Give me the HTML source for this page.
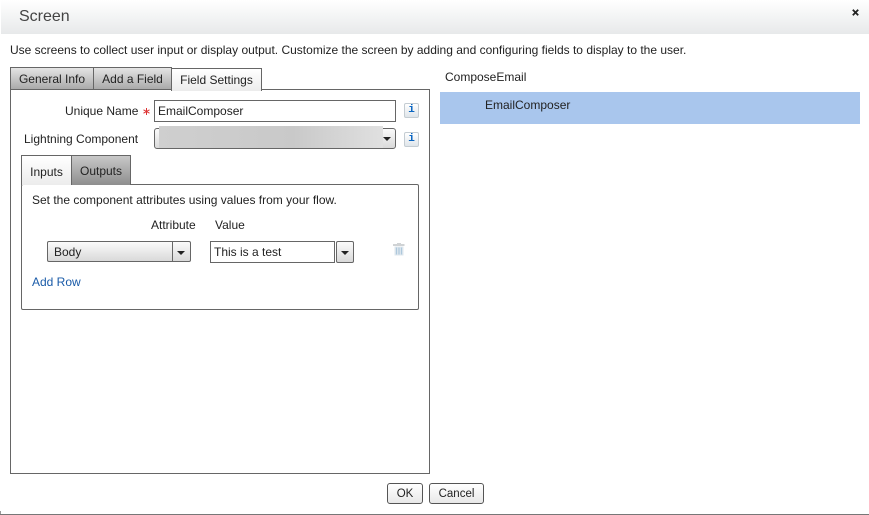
<!DOCTYPE html>
<html><head><meta charset="utf-8"><style>
html,body{margin:0;padding:0;background:#fff}
#p{position:relative;width:869px;height:515px;overflow:hidden;background:#fff;font:12px "Liberation Sans",Arial,sans-serif;color:#222}
#p div{position:absolute;box-sizing:border-box;white-space:nowrap}
.t{line-height:14px}
.tab{background:linear-gradient(#e4e4e4,#aaa);border:1px solid #666;text-align:center}
.on{background:linear-gradient(#fff,#ececec);border:1px solid #666;border-bottom:0;text-align:center}
.info{width:15px;height:15px;background:linear-gradient(#fff,#dfe5ea);border:1px solid #c4ccd2;border-radius:2px;color:#0a66c2;font:bold 11px/13px "Liberation Mono",monospace;text-align:center}
.inp{background:#fff;border:1px solid #666;padding-left:3px}
.sel{background:linear-gradient(#fbfbfb,#d9d9d9);border:1px solid #666;border-radius:2px}
.arr{width:0;height:0;border-left:4px solid transparent;border-right:4px solid transparent;border-top:4px solid #222}
</style></head><body><div id="p">
<div style="left:1px;top:0;width:868px;height:34px;background:linear-gradient(#fff,#e7e9ea)"></div>
<div class="t" style="left:19px;top:8px;font-size:16px;line-height:18px;color:#444">Screen</div>
<svg style="position:absolute;left:852px;top:9px" width="7" height="7" viewBox="0 0 7 7"><path d="M.8.8l5.4 5.4M6.200.8L.8 6.200" stroke="#222" stroke-width="1.800"/></svg>
<div class="t" style="left:10px;top:43px;letter-spacing:0">Use screens to collect user input or display output. Customize the screen by adding and configuring fields to display to the user.</div>

<div style="left:10px;top:89px;width:420px;height:385px;border:1px solid #666"></div>
<div class="tab t" style="left:10px;top:67px;width:84px;height:23px;line-height:22px">General Info</div>
<div class="tab t" style="left:93px;top:67px;width:79px;height:23px;line-height:22px">Add a Field</div>
<div class="on t" style="left:171px;top:68px;width:91px;height:23px;line-height:23px">Field Settings</div>

<div class="t" style="left:65px;top:104px">Unique Name</div>
<svg style="position:absolute;left:143px;top:108px" width="7" height="7" viewBox="0 0 7 7"><path d="M3.500 0v7M.5 1.800l6 3.400M6.500 1.800l-6 3.400" stroke="#d33" stroke-width="1"/></svg>
<div class="inp" style="left:154px;top:100px;width:242px;height:22px;line-height:20px">EmailComposer</div>
<div class="info" style="left:404px;top:103px">i</div>

<div class="t" style="left:24px;top:132px">Lightning Component</div>
<div class="sel" style="left:154px;top:128px;width:242px;height:21px;border-radius:3px"></div>
<div style="left:159px;top:126px;width:224px;height:22px;background:linear-gradient(90deg,#cfcfcf,#c9c9c9 60%,#e0e0e0)"></div>
<div class="arr" style="left:383px;top:137px"></div>
<div class="info" style="left:404px;top:132px">i</div>

<div style="left:21px;top:184px;width:398px;height:126px;border:1px solid #666;border-radius:2px"></div>
<div class="on t" style="left:21px;top:155px;width:51px;height:30px;line-height:33px">Inputs</div>
<div class="tab t" style="left:71px;top:155px;width:60px;height:30px;line-height:30px;background:linear-gradient(#c8c8c8,#8e8e8e);border-bottom:0">Outputs</div>

<div class="t" style="left:32px;top:193px">Set the component attributes using values from your flow.</div>
<div class="t" style="left:151px;top:218px">Attribute</div>
<div class="t" style="left:215px;top:218px">Value</div>

<div class="sel" style="left:47px;top:241px;width:144px;height:21px;padding-left:6px;line-height:20px">Body</div>
<div style="left:172px;top:242px;width:1px;height:19px;background:#666"></div>
<div class="arr" style="left:177px;top:251px"></div>
<div class="inp" style="left:210px;top:241px;width:125px;height:22px;line-height:20px">This is a test</div>
<div class="sel" style="left:336px;top:241px;width:18px;height:22px"></div>
<div class="arr" style="left:341px;top:251px"></div>

<svg style="position:absolute;left:393px;top:243px" width="12" height="13" viewBox="0 0 12 13"><path d="M0 2h11.500" stroke="#d0d3d5" stroke-width="2"/><path d="M4 .5h4" stroke="#d0d3d5"/><path d="M1.500 3.500h9v9h-9z" fill="#dfe7ee"/><path d="M3.500 4.500v7M6 4.500v7M8.500 4.500v7" stroke="#adc8dc" stroke-width="1.200"/></svg>
<div class="t" style="left:32px;top:275px;color:#1a5ba8">Add Row</div>

<div class="t" style="left:445px;top:70px">ComposeEmail</div>
<div style="left:440px;top:92px;width:420px;height:32px;background:#a9c6ed"></div>
<div class="t" style="left:485px;top:98px">EmailComposer</div>

<div style="left:387px;top:483px;width:36px;height:21px;border:1px solid #555;border-radius:3px;background:linear-gradient(#fff,#e8e8e8);text-align:center;line-height:20px;font-size:11.500px">OK</div>
<div style="left:429px;top:483px;width:55px;height:21px;border:1px solid #555;border-radius:3px;background:linear-gradient(#fff,#e8e8e8);text-align:center;line-height:20px;font-size:11.500px">Cancel</div>
<div style="left:0;top:514px;width:869px;height:1px;background:#777"></div>
<div style="left:0;top:511px;width:1px;height:3px;background:#999"></div>
</div></body></html>
